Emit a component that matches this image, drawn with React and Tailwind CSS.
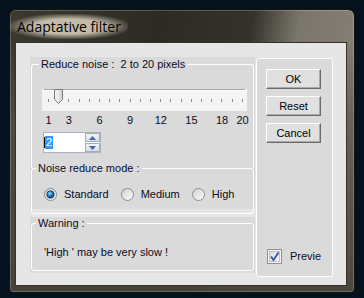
const ticks = Array.from({ length: 20 }, (_, i) => i + 1);
const labels = [1, 3, 6, 9, 12, 15, 18, 20];
const tickLeft = (v) => 6 + ((v - 1) * 194) / 19;

function Radio({ checked }) {
  return (
    <svg width="13" height="13" viewBox="0 0 13 13">
      <defs>
        <linearGradient id="rb" x1="0" y1="0" x2="1" y2="1">
          <stop offset="0" stopColor="#cfcfcf" />
          <stop offset="1" stopColor="#fcfcfc" />
        </linearGradient>
        <radialGradient id="rd" cx="0.4" cy="0.35" r="0.7">
          <stop offset="0" stopColor="#9fdcff" />
          <stop offset="0.5" stopColor="#1c7dc8" />
          <stop offset="1" stopColor="#0a3a6e" />
        </radialGradient>
      </defs>
      <circle cx="6.5" cy="6.5" r="6" fill="url(#rb)" stroke="#8a8a8a" />
      {checked && <circle cx="6.5" cy="6.5" r="3.7" fill="url(#rd)" stroke="#18395e" strokeWidth="0.8" />}
    </svg>
  );
}

function Arrow({ up }) {
  return (
    <svg width="7" height="4" viewBox="0 0 7 4">
      <path d={up ? "M0 4 L3.5 0 L7 4 Z" : "M0 0 L3.5 4 L7 0 Z"} fill="#4563b4" />
    </svg>
  );
}

function Button({ children }) {
  return (
    <button className="h-[20px] w-[55px] border border-t-white border-l-white border-r-[#6b6b6b] border-b-[#6b6b6b] bg-[#e0e0e0] text-[11px] leading-[13px] text-black shadow-[inset_-1px_-1px_0_#a9a9a9]">
      {children}
    </button>
  );
}

export default function App() {
  return (
    <div className="h-[298px] w-[364px] overflow-hidden bg-[#05111c] pl-[9px] pt-[9px] font-['Liberation_Sans',Arial,sans-serif] text-[11px] leading-[13px] text-[#0b0b26]">
      <div className="flex h-[284px] w-[346px] flex-col rounded-t-[7px] rounded-b-[4px] border border-[#15130f] bg-[linear-gradient(to_bottom,rgba(0,0,0,0)_10%,rgba(88,84,74,0.7)_40%,rgba(72,68,59,0.95)_100%),linear-gradient(100deg,#3b382f_0%,#2c2a24_38%,#35322b_62%,#7a766c_74%,#89857c_100%)] shadow-[inset_0_0_0_1px_rgba(255,255,255,0.2)]">
        {/* title */}
        <div className="flex h-[32px] items-center">
          <span className="rounded-full px-[7px] py-[3px] font-['Open_Sans',sans-serif] text-[14px] leading-[19px] text-black bg-[radial-gradient(ellipse_at_center,rgba(236,226,206,0.78)_42%,rgba(236,226,206,0)_76%)]">
            Adaptative filter
          </span>
        </div>

        {/* client */}
        <div className="ml-[5px] flex h-[244px] w-[332px] gap-[1px] border border-[#34312b] bg-[#e6e6e6] pl-[14px] pt-[14px]">
          <div className="flex w-[225px] flex-col gap-[8px]">
            <div className="h-[152px] bg-[#dadada] pt-[1px] pb-[1px]">
              <fieldset className="mx-[1px] rounded-t-[3px] border border-b-0 border-white">
                <legend className="ml-[7px] whitespace-pre px-[2px]">Reduce noise :  2 to 20 pixels</legend>
                <div className="pl-[10px] pt-[11px] pb-[15px]">
                  <div className="relative h-[22px] w-[205px] bg-[#f4f4f4]">
                    <div className="mx-[2px] mt-[7px] h-[2px] border-t border-t-[#a4a4a4] border-b border-b-white" />
                    <div className="mt-[8px] ml-[6px] flex w-[195px] justify-between">
                      {ticks.map((t) => (
                        <div key={t} className="h-[3px] w-[1px] bg-[#8c8c8c]" />
                      ))}
                    </div>
                    <svg className="absolute top-0 left-[12px]" width="9" height="15" viewBox="0 0 9 15">
                      <defs>
                        <linearGradient id="th" x1="0" y1="0" x2="1" y2="0">
                          <stop offset="0" stopColor="#fafafa" />
                          <stop offset="1" stopColor="#d2d2d2" />
                        </linearGradient>
                      </defs>
                      <path d="M0.5 0.5 H8.5 V10.5 L4.5 14.5 L0.5 10.5 Z" fill="url(#th)" stroke="#777" />
                    </svg>
                  </div>
                  <div className="relative mt-[3px] h-[13px] w-[205px]">
                    {labels.map((v) => (
                      <span key={v} className="absolute top-0 -translate-x-1/2" style={{ left: tickLeft(v) + 0.5 }}>
                        {v}
                      </span>
                    ))}
                  </div>
                  <div className="mt-[5px] ml-[1px] flex h-[21px] w-[58px] border border-[#abb5c1] bg-white">
                    <div className="flex flex-1 items-center">
                      <div className="h-[11px] w-[1px] bg-black" />
                      <span className="bg-[#3399ff] px-[1px] text-white">2</span>
                    </div>
                    <div className="flex w-[15px] flex-col gap-[1px]">
                      <div className="flex h-[9px] items-center justify-center border border-[#a6adba] bg-[linear-gradient(to_bottom,#f4f5f7,#d9dde5)]">
                        <Arrow up />
                      </div>
                      <div className="flex h-[9px] items-center justify-center border border-[#a6adba] bg-[linear-gradient(to_bottom,#f4f5f7,#d9dde5)]">
                        <Arrow />
                      </div>
                    </div>
                  </div>
                </div>
              </fieldset>
              <fieldset className="mx-[1px] -mt-[6px] rounded-[3px] border border-white">
                <legend className="ml-[4px] bg-[#dadada] px-[2px]">Noise reduce mode :</legend>
                <div className="flex h-[13px] items-center gap-[12px] box-content pl-[12px] pt-[13px] pb-[12px]">
                  {[
                    ["Standard", true],
                    ["Medium", false],
                    ["High", false],
                  ].map(([label, on]) => (
                    <label key={label} className="flex items-center gap-[7px]">
                      <Radio checked={on} />
                      <span>{label}</span>
                    </label>
                  ))}
                </div>
              </fieldset>
            </div>

            <div className="h-[56px] bg-[#dadada] pb-[1px]">
              <fieldset className="mx-[1px] rounded-[3px] border border-white">
                <legend className="ml-[4px] px-[2px]">Warning :</legend>
                <p className="h-[13px] box-content pl-[12px] pt-[16px] pb-[11px]">'High ' may be very slow !</p>
              </fieldset>
            </div>
          </div>

          <div className="mt-[1px] flex h-[219px] w-[77px] flex-col gap-[7px] rounded-[3px] border border-white bg-[#dadada] pl-[9px] pt-[10px] pb-[12px]">
            <Button>OK</Button>
            <Button>Reset</Button>
            <Button>Cancel</Button>
            <div className="mt-auto flex items-center gap-[8px] pl-[1px]">
              <svg width="15" height="15" viewBox="0 0 15 15">
                <defs>
                  <linearGradient id="cb" x1="0" y1="0" x2="1" y2="1">
                    <stop offset="0" stopColor="#d6d6d6" />
                    <stop offset="1" stopColor="#fdfdfd" />
                  </linearGradient>
                </defs>
                <rect x="0.5" y="0.5" width="14" height="14" fill="#f6f6f6" stroke="#8e8f8f" />
                <rect x="2.5" y="2.5" width="10" height="10" fill="url(#cb)" stroke="#c2c2c2" />
                <path d="M4 7.5 L6.5 11 L11.5 3.5" fill="none" stroke="#3f5cad" strokeWidth="2" />
              </svg>
              <span>Previe</span>
            </div>
          </div>
        </div>
      </div>
    </div>
  );
}
